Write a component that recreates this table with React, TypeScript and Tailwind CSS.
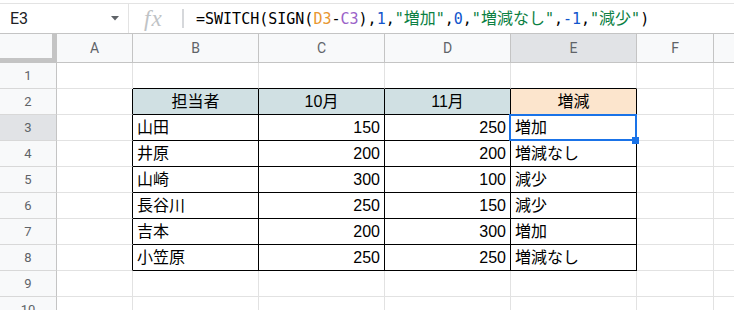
import React from 'react';

const W = ['w-[57px]', 'w-[76px]', 'w-[126px]', 'w-[126px]', 'w-[126px]', 'w-[126px]', 'w-[77px]', 'flex-1'];
const LETTERS = ['', 'A', 'B', 'C', 'D', 'E', 'F', ''];

const head = ['担当者', '10月', '11月', '増減'];
const data: [string, number, number, string][] = [
  ['山田', 150, 250, '増加'],
  ['井原', 200, 200, '増減なし'],
  ['山崎', 300, 100, '減少'],
  ['長谷川', 250, 150, '減少'],
  ['吉本', 200, 300, '増加'],
  ['小笠原', 250, 250, '増減なし'],
];

const cellFont = "font-['Liberation_Sans','Noto_Sans_CJK_JP',sans-serif]";
const uiFont = "font-['Roboto','Liberation_Sans',sans-serif]";

function FormulaBar() {
  // token colours follow the sheet's formula highlighting
  const tok: [string, string][] = [
    ['=SWITCH(SIGN(', 'text-black'],
    ['D3', 'text-[#e8962e]'],
    ['-', 'text-black'],
    ['C3', 'text-[#9a62c8]'],
    ['),', 'text-black'],
    ['1', 'text-[#1155cc]'],
    [',', 'text-black'],
    ['"増加"', 'text-[#0b8043]'],
    [',', 'text-black'],
    ['0', 'text-[#1155cc]'],
    [',', 'text-black'],
    ['"増減なし"', 'text-[#0b8043]'],
    [',', 'text-black'],
    ['-1', 'text-[#1155cc]'],
    [',', 'text-black'],
    ['"減少"', 'text-[#0b8043]'],
    [')', 'text-black'],
  ];
  return (
    <div className="mt-[3px] h-[31px] flex border-t border-b border-t-[#e3e3e3] border-b-[#c4c4c4]">
      <div className="w-[129px] shrink-0 flex items-center border-r border-[#e3e3e3] pl-[10px] pr-[9px]">
        <span className={`${uiFont} text-[16px] text-[#202124]`}>E3</span>
        <svg className="ml-auto" width="8" height="5" viewBox="0 0 8 5">
          <path d="M0 0h8L4 4.5z" fill="#5f6368" />
        </svg>
      </div>
      <div className="w-[53px] shrink-0 flex items-center pl-[15px]">
        <span className="font-['Liberation_Serif',serif] italic text-[23px] leading-none text-[#c0c3c6] tracking-[1px]">fx</span>
      </div>
      <div className="w-[2px] shrink-0 my-[5px] bg-[#d6d8db]" />
      <div className="flex items-center pl-[12px] whitespace-nowrap">
        <span className="font-['DejaVu_Sans_Mono','Noto_Sans_CJK_JP',monospace] text-[15px] [&_.cjk]:text-[16px]">
          {tok.map(([t, c], i) => (
            <span key={i} className={c}>
              {t.split(/([^\x00-\x7f]+)/).map((p, j) =>
                j % 2 ? <span key={j} className="text-[16px]">{p}</span> : p
              )}
            </span>
          ))}
        </span>
      </div>
    </div>
  );
}

function ColumnHeader() {
  return (
    <div className="flex h-[29px]">
      {LETTERS.map((l, c) => (
        <div
          key={c}
          className={`${W[c]} shrink-0 relative flex items-center justify-center border-b border-r border-[#c4c4c4] ${c === 5 ? 'bg-[#e1e3e6]' : 'bg-[#f8f9fa]'} ${uiFont} text-[14px] text-[#5f6368] ${c === 7 ? 'border-r-0' : ''}`}
        >
          {c === 0 ? (
            <>
              <div className="absolute right-0 top-0 bottom-[-1px] w-[4px] bg-[#c4c4c4]" />
              <div className="absolute left-0 right-0 bottom-0 h-[4px] bg-[#c4c4c4]" />
            </>
          ) : l}
        </div>
      ))}
    </div>
  );
}

function content(r: number, c: number) {
  if (r === 2 && c >= 2 && c <= 5) return { text: head[c - 2], align: 'justify-center' };
  if (r >= 3 && r <= 8 && c >= 2 && c <= 5) {
    const row = data[r - 3];
    const v = row[c - 2];
    return { text: String(v), align: c === 3 || c === 4 ? 'justify-end pr-[4px]' : 'justify-start pl-[4px]' };
  }
  return null;
}

function Row({ r }: { r: number }) {
  return (
    <div className="flex h-[26px]">
      {W.map((w, c) => {
        const inTable = r >= 2 && r <= 8;
        const rightBlack = inTable && c >= 1 && c <= 5;
        const bottomBlack = r >= 1 && r <= 8 && c >= 2 && c <= 5;
        const rc = rightBlack ? 'border-r-black' : c === 0 ? 'border-r-[#c4c4c4]' : 'border-r-[#e2e2e2]';
        const bc = bottomBlack ? 'border-b-black' : c === 0 ? 'border-b-[#d8d8d8]' : 'border-b-[#e2e2e2]';
        let bg = 'bg-white';
        if (c === 0) bg = r === 3 ? 'bg-[#e1e3e6]' : 'bg-[#f8f9fa]';
        else if (r === 2 && c >= 2 && c <= 4) bg = 'bg-[#d0e0e3]';
        else if (r === 2 && c === 5) bg = 'bg-[#fce5cd]';
        const ct = content(r, c);
        return (
          <div key={c} className={`${w} shrink-0 relative flex items-center border-r border-b ${rc} ${bc} ${bg} ${c === 7 ? 'border-r-0' : ''}`}>
            {c === 0 && (
              <span className={`w-full text-center ${uiFont} text-[13px] text-[#5f6368]`}>{r}</span>
            )}
            {ct && (
              <div className={`w-full flex ${ct.align} ${cellFont} text-[16px] text-black`}>{ct.text}</div>
            )}
            {r === 3 && c === 5 && (
              <div className="absolute z-10 -left-[2px] -top-[1px] -right-[1px] -bottom-[1px] border-2 border-[#1a73e8]">
                <div className="absolute -right-[4px] -bottom-[5px] w-[7px] h-[7px] bg-[#1a73e8]" />
              </div>
            )}
          </div>
        );
      })}
    </div>
  );
}

export default function App() {
  return (
    <div className="w-[734px] h-[310px] overflow-hidden bg-white">
      <FormulaBar />
      <ColumnHeader />
      {[1, 2, 3, 4, 5, 6, 7, 8, 9, 10].map((r) => (
        <Row key={r} r={r} />
      ))}
    </div>
  );
}
